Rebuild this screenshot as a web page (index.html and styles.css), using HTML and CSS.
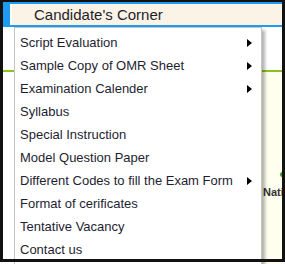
FILE: index.html
```html
<!DOCTYPE html>
<html lang="en">
<head>
    <meta charset="UTF-8" />
    <title>Candidate's Corner</title>
    <link rel="stylesheet" href="styles.css">
</head>
<body>
<div class="screen">
    <!-- barra do menu -->
    <div class="topbar">
        <div class="tab">Candidate's Corner</div>
    </div>

    <div class="page">
        <div class="band"></div>
        <div class="row">
            <div class="gutter"></div>
            <div class="main">
                <span class="dot"></span>
                <h3 class="title">National Level Examination</h3>
            </div>
        </div>
    </div>

    <!-- dropdown aberto -->
    <ul class="menu">
        <li class="item">Script Evaluation <span class="arrow"></span></li>
        <li class="item">Sample Copy of OMR Sheet <span class="arrow"></span></li>
        <li class="item">Examination Calender <span class="arrow"></span></li>
        <li class="item">Syllabus</li>
        <li class="item">Special Instruction</li>
        <li class="item">Model Question Paper</li>
        <li class="item">Different Codes to fill the Exam Form <span class="arrow"></span></li>
        <li class="item">Format of cerificates</li>
        <li class="item">Tentative Vacancy</li>
        <li class="item">Contact us</li>
    </ul>

    <div class="frame"></div>
</div>
</body>
</html>
```

FILE: styles.css
```css
body {
    margin: 0;
    font-family: "Liberation Sans", Arial, sans-serif;
    background: #fff;
}
.screen {
    position: relative;
    width: 285px;
    height: 264px;
    padding: 2px 3px 0 3px;
    box-sizing: border-box;
    overflow: hidden;
    background: #fff;
}
.topbar {
    background: #1d9bf0;
    padding: 2px 0 2px 7px;
}
.tab {
    height: 21px;
    line-height: 21px;
    background: #faf3e6;
    border-left: 2px solid #fff;
    padding-left: 22px;
    font-size: 15px;
    color: #1f1f2c;
}
.band {
    height: 43px;
    background: #fff;
    border-bottom: 2px solid #8cc21c;
}
.row {
    display: flex;
    height: 200px;
}
.gutter {
    width: 11px;
    background: #fff;
}
.main {
    flex: 1;
    background: #fffff0;
    overflow: hidden;
}
.dot {
    display: block;
    width: 5px;
    height: 5px;
    border-radius: 50%;
    background: #3a9a2a;
    margin: 100px 0 0 266px;
}
.title {
    margin: 9px 0 0 249px;
    font-size: 11px;
    line-height: 13px;
    font-weight: bold;
    color: #333;
    white-space: nowrap;
}
.menu {
    position: absolute;
    left: 14px;
    top: 27px;
    width: 248px;
    box-sizing: border-box;
    margin: 0;
    padding: 3px 0;
    list-style: none;
    background: #fff;
    border: 1px solid #c4c4c4;
    box-shadow: 3px 3px 3px rgba(0, 0, 0, 0.3);
}
.item {
    display: flex;
    align-items: center;
    justify-content: space-between;
    height: 23px;
    padding: 0 9px 0 5px;
    font-size: 13px;
    color: #1e1e30;
}
.arrow {
    width: 0;
    height: 0;
    border-left: 5px solid #000;
    border-top: 4px solid transparent;
    border-bottom: 4px solid transparent;
}
.frame {
    position: absolute;
    left: 0;
    top: 0;
    right: 0;
    bottom: 2px;
    border: solid #111;
    border-width: 2px 3px 3px 3px;
    z-index: 5;
    pointer-events: none;
}
```
